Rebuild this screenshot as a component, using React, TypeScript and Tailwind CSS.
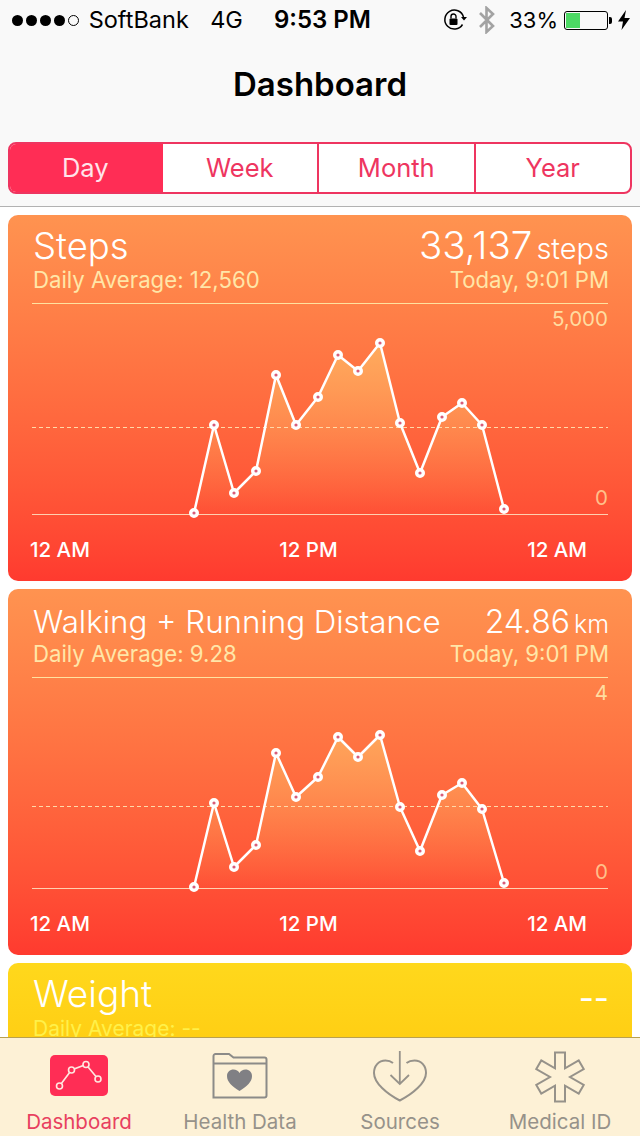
import { useId } from "react";

const font = { fontFamily: "Inter, 'Noto Sans', sans-serif" };

type Pt = [number, number];

const stepsPts: Pt[] = [
  [186, 209], [206, 121], [226, 189], [248, 167], [268, 71], [288, 121], [310, 93], [330, 51],
  [350, 67], [372, 39], [392, 119], [412, 169], [434, 113], [454, 99], [474, 121], [496, 205],
];

const distancePts: Pt[] = [
  [186, 209], [206, 125], [226, 189], [248, 167], [268, 75], [288, 119], [310, 99], [330, 59],
  [350, 79], [372, 57], [392, 129], [412, 173], [434, 117], [454, 105], [474, 131], [496, 205],
];

function Chart({ pts, dashY, top }: { pts: Pt[]; dashY: number; top: string }) {
  const id = useId();
  const line = pts.map((p) => p.join(",")).join(" ");
  const area = `${pts[0][0]},210 ${line} ${pts[pts.length - 1][0]},210`;
  return (
    <div className="relative h-[221px]">
      <svg width="624" height="221" viewBox="0 0 624 221" className="block">
        <defs>
          <linearGradient id={id} gradientUnits="userSpaceOnUse" x1="0" y1="40" x2="0" y2="210">
            <stop offset="0" stopColor="#ffb060" stopOpacity="0.9" />
            <stop offset="1" stopColor="#ffb060" stopOpacity="0" />
          </linearGradient>
        </defs>
        <polygon points={area} fill={`url(#${id})`} />
        <line x1="24" x2="600" y1={dashY} y2={dashY} stroke="#ffd9a8" strokeWidth="1" strokeDasharray="4 3" />
        <line x1="24" x2="600" y1="210.5" y2="210.5" stroke="#ffd0b0" strokeWidth="1" />
        <polyline points={line} fill="none" stroke="#fff" strokeWidth="2.5" strokeLinejoin="round" />
        {pts.map(([x, y]) => (
          <circle key={x} cx={x} cy={y} r="3.3" fill="#d85c78" stroke="#fff" strokeWidth="3.4" />
        ))}
      </svg>
      <span className="absolute right-[24px] top-[2px] text-[20.5px] leading-[26px] text-[#ffdca0]">{top}</span>
      <span className="absolute right-[24px] top-[181px] text-[20.5px] leading-[26px] text-[#ffc08a]">0</span>
    </div>
  );
}

function Card({
  title, avg, value, unit, top, pts, dashY, rowClass, titleClass, valueClass, unitClass,
}: {
  title: string; avg: string; value: string; unit: string; top: string; pts: Pt[]; dashY: number;
  rowClass: string; titleClass: string; valueClass: string; unitClass: string;
}) {
  return (
    <div className="h-[366px] shrink-0 rounded-[10px] bg-gradient-to-b from-[#ff9350] to-[#ff3a2f] text-white">
      <div className="pl-[25px] pr-[23px] pt-[12px]">
        <div className={`flex items-baseline justify-between h-[38px] ${rowClass}`}>
          <span className={`${titleClass} leading-[38px] font-light`}>{title}</span>
          <span className="leading-[38px]">
            <span className={`${valueClass} font-light`}>{value}</span>
            <span className={`${unitClass} font-light ml-[4px]`}>{unit}</span>
          </span>
        </div>
        <div className="flex justify-between h-[28px] mt-[1px] text-[22.2px] leading-[28px] text-[#ffe6a8]">
          <span>{avg}</span>
          <span>Today, 9:01 PM</span>
        </div>
      </div>
      <div className="mx-[24px] mt-[9px] h-px bg-[#ffe2a0]" />
      <Chart pts={pts} dashY={dashY} top={top} />
      <div className="flex justify-between pl-[22px] pr-[45px] pt-[12px] text-[20.5px] leading-[26px] font-medium">
        <span>12 AM</span>
        <span>12 PM</span>
        <span>12 AM</span>
      </div>
    </div>
  );
}

function StatusBar() {
  return (
    <div className="flex items-center h-[40px] pl-[12px] pr-[10px] text-[22px] text-black">
      <div className="flex items-center gap-[3px] w-[77px]">
        <i className="block w-[11px] h-[11px] rounded-full bg-black" />
        <i className="block w-[11px] h-[11px] rounded-full bg-black" />
        <i className="block w-[11px] h-[11px] rounded-full bg-black" />
        <i className="block w-[11px] h-[11px] rounded-full bg-black" />
        <i className="block w-[11px] h-[11px] rounded-full border border-black" />
      </div>
      <span className="w-[122px] text-[23.5px]">SoftBank</span>
      <span className="w-[64px] text-[23.5px]">4G</span>
      <span className="font-semibold w-[170px] text-[24px]">9:53 PM</span>
      <svg width="26" height="24" viewBox="0 0 26 24" className="shrink-0">
        <path d="M20.5 9 A9.5 9.5 0 1 0 19.5 16.5" fill="none" stroke="#000" strokeWidth="1.5" />
        <path d="M18 9 h6 l-3 3.5 z" fill="#000" />
        <rect x="6.5" y="10.5" width="8" height="6.5" rx="1" fill="#000" />
        <path d="M8 10.5 V8.5 a2.5 2.5 0 0 1 5 0 V10.5" fill="none" stroke="#000" strokeWidth="1.4" />
      </svg>
      <svg width="18" height="28" viewBox="0 0 18 28" className="ml-[9px] shrink-0">
        <path d="M2 7 L15 20 L8.5 26 V2 L15 8 L2 21" fill="none" stroke="#a3a3a3" strokeWidth="2.6" />
      </svg>
      <span className="ml-[13px] w-[55px]">33%</span>
      <div className="flex items-center shrink-0">
        <div className="w-[44px] h-[19px] rounded-[3px] border border-black p-px">
          <div className="w-[14px] h-full bg-[#4cd964]" />
        </div>
        <div className="w-[3px] h-[7px] bg-black rounded-r-[2px] ml-px" />
      </div>
      <svg width="12" height="20" viewBox="0 0 12 20" className="ml-[6px] shrink-0">
        <path d="M8 0 L0 11.5 H5 L3.5 20 L12 8 H6.5 Z" fill="#000" />
      </svg>
    </div>
  );
}

function Segments() {
  const seg = "flex-1 flex items-center justify-center";
  return (
    <div className="flex h-[52px] mx-[8px] rounded-[8px] border-2 border-[#ee3560] bg-white text-[25.5px] text-[#ee3560] overflow-hidden">
      <div className={`${seg} bg-[#ff2d55] text-[#ffe4ea] -ml-[2px]`}>Day</div>
      <div className={`${seg} border-r-2 border-[#ee3560]`}>Week</div>
      <div className={`${seg} border-r-2 border-[#ee3560]`}>Month</div>
      <div className={seg}>Year</div>
    </div>
  );
}

function starPoints() {
  const w = 5;
  const L = 24.5;
  const out: string[] = [];
  for (let i = 0; i < 6; i++) {
    const a = ((90 + i * 60) * Math.PI) / 180;
    const dx = Math.cos(a);
    const dy = -Math.sin(a);
    const px = -dy;
    const py = dx;
    const cx = 25 + L * dx;
    const cy = 26 + L * dy;
    out.push(`${cx + w * px},${cy + w * py}`);
    out.push(`${cx - w * px},${cy - w * py}`);
    const b = ((90 + i * 60 + 30) * Math.PI) / 180;
    out.push(`${25 + 2 * w * Math.cos(b)},${26 - 2 * w * Math.sin(b)}`);
  }
  return out.join(" ");
}

function TabBar() {
  const label = "text-[20.5px] leading-[26px] mt-auto";
  return (
    <div className="grid grid-cols-4 h-[99px] shrink-0 border-t border-[#b8a050] bg-[#fdf1d6] text-[#96928a] pb-[1px]">
      <div className="flex flex-col items-center text-[#e8405f] pt-[17px] pr-[2px]">
        <svg width="58" height="41" viewBox="0 0 58 41">
          <rect width="58" height="41" rx="5" fill="#ff2d55" />
          <polyline points="9.5,31 21.5,15 36,9.5 48,24" fill="none" stroke="#ffe8e0" strokeWidth="1.6" />
          {[[9.5, 31], [21.5, 15], [36, 9.5], [48, 24]].map(([x, y]) => (
            <circle key={x} cx={x} cy={y} r="3" fill="#ff2d55" stroke="#ffe8e0" strokeWidth="1.6" />
          ))}
        </svg>
        <span className={label}>Dashboard</span>
      </div>
      <div className="flex flex-col items-center pt-[15px]">
        <svg width="56" height="46" viewBox="0 0 56 46">
          <path d="M1.5 44.5 V3 a2 2 0 0 1 2 -2 H17 l4.5 3.5 H52.5 a2 2 0 0 1 2 2 V42.5 a2 2 0 0 1 -2 2 Z" fill="none" stroke="#8c8b88" strokeWidth="2" />
          <path d="M1.5 10.5 H54.5" fill="none" stroke="#8c8b88" strokeWidth="2" />
          <path d="M27.5 38 C20 33 15 29 15 23 C15 19 18 16.5 21.5 16.5 C24 16.5 26.5 18 27.5 20 C28.5 18 31 16.5 33.5 16.5 C37 16.5 40 19 40 23 C40 29 35 33 27.5 38 Z" fill="#808084" />
        </svg>
        <span className={label}>Health Data</span>
      </div>
      <div className="flex flex-col items-center pt-[12px]">
        <svg width="54" height="52" viewBox="0 0 54 52">
          <path d="M20 13 C17.5 11 15 10.5 12.5 10.5 C5.5 10.5 1 16 1 23 C1 33 14 44 26.8 50.5 C39.5 44 53 33 53 23 C53 16 48.5 10.5 41.5 10.5 C39 10.5 36 11 33.5 13" fill="none" stroke="#96928a" strokeWidth="2" />
          <path d="M26.8 1 V34 M17.5 25 L26.8 34 L36 25" fill="none" stroke="#96928a" strokeWidth="1.8" />
        </svg>
        <span className={label}>Sources</span>
      </div>
      <div className="flex flex-col items-center pt-[13px]">
        <svg width="50" height="52" viewBox="0 0 50 52">
          <polygon points={starPoints()} fill="none" stroke="#96928a" strokeWidth="2" strokeLinejoin="miter" />
        </svg>
        <span className={label}>Medical ID</span>
      </div>
    </div>
  );
}

export default function App() {
  return (
    <div className="flex flex-col w-[640px] h-[1136px] overflow-hidden bg-white" style={font}>
      <div className="shrink-0 h-[207px] bg-[#f9f9f9] border-b border-[#b2b2b2]">
        <StatusBar />
        <div className="h-[102px] pt-[22px] text-center text-[33px] leading-[44px] font-semibold text-black">Dashboard</div>
        <Segments />
      </div>
      <div className="flex-1 min-h-0 overflow-hidden flex flex-col gap-[8px] px-[8px] pt-[8px]">
        <Card
          title="Steps" avg="Daily Average: 12,560" value="33,137" unit="steps" top="5,000"
          pts={stepsPts} dashY={123.5} rowClass="-translate-y-px"
          titleClass="text-[36.5px]" valueClass="text-[38.5px]" unitClass="text-[29px]"
        />
        <Card
          title="Walking + Running Distance" avg="Daily Average: 9.28" value="24.86" unit="km" top="4"
          pts={distancePts} dashY={128.5} rowClass="translate-y-[2px]"
          titleClass="text-[31.3px]" valueClass="text-[32px]" unitClass="text-[25px]"
        />
        <div className="shrink-0 h-[200px] rounded-[10px] bg-gradient-to-b from-[#ffd81c] to-[#ffbf00] text-white pl-[25px] pr-[23px] pt-[12px]">
          <div className="flex justify-between h-[38px] text-[37px] leading-[38px] font-light">
            <span>Weight</span>
            <span className="text-[33px] font-normal pt-[4px]">--</span>
          </div>
          <div className="text-[21px] leading-[28px] mt-[2px] text-[#fff04a]">Daily Average: --</div>
        </div>
      </div>
      <TabBar />
    </div>
  );
}
